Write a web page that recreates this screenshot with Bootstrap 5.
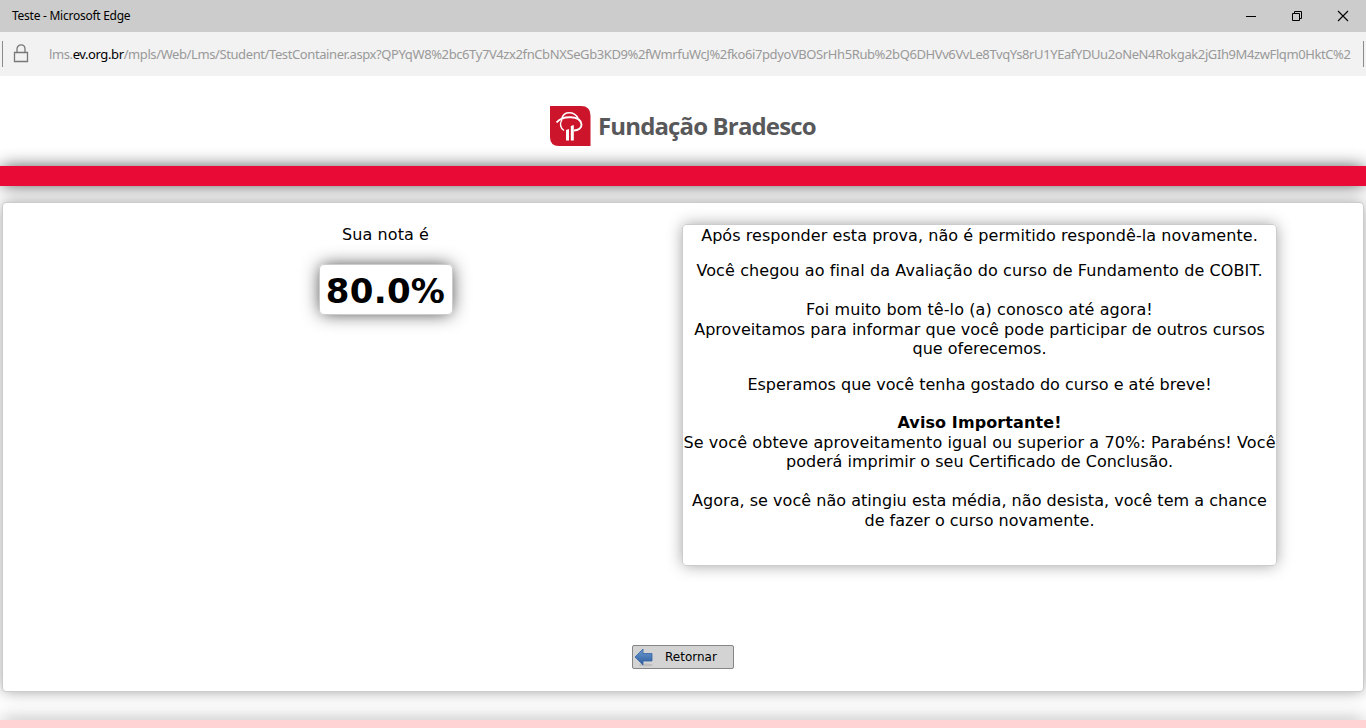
<!DOCTYPE html>
<html lang="pt-BR">
<head>
<meta charset="utf-8">
<meta name="viewport" content="width=device-width, initial-scale=1">
<title>Teste</title>
<link href="https://cdn.jsdelivr.net/npm/bootstrap@5.3.0/dist/css/bootstrap.min.css" rel="stylesheet">
<style>
body{height:728px;font-family:Verdana,"DejaVu Sans",sans-serif;color:#000;font-size:16px;line-height:19.5px}
.titlebar{height:32px;background:#ccc;font:12px/32px "Noto Sans",sans-serif;padding-left:12px}
.titlebar .caption{letter-spacing:-.26px}
.winbtns svg{width:46px;height:32px}
.address{height:44px;background:#f2f2f2;font:13px/44px "Noto Sans",sans-serif;color:#999;padding:0 2px}
.address .edge{width:1px;height:26px;background:#8b8b8b}
.lock{margin-left:9px}
.url{letter-spacing:-.4px;width:1304px;margin-left:17px}
.url b{font-weight:400;color:#000}
.brandrow{height:90px;padding:30px 0 0 549px}
.brandname{font:700 24px/39px "Open Sans",sans-serif;color:#58585b;margin-left:7px;letter-spacing:-.86px}
.redbar{height:20px;background:#e90b35}
.redbar,.score,.footbar{box-shadow:0 0 18px -2px #333}
.panel{margin:16px 2px 0;height:490px;border:1px solid #ccc;border-radius:4px;background:#fff;box-shadow:0 0 16px -1px #999;padding-top:21px}
.cols{width:1188px;margin-left:86px}
.grade{padding-top:.7px;letter-spacing:.1px}
.score{width:134px;height:51px;margin:20px auto 0;border:1px solid #ccc;border-radius:5px;font:700 34px/52px Verdana,"DejaVu Sans",sans-serif;letter-spacing:.3px}
.notice{width:595px;height:342px;border:1px solid #ccc;border-radius:4px;box-shadow:0 0 16px -1px #999;white-space:nowrap;padding-top:.7px}
.notice p{margin:0 0 16px}
.notice p.farewell{margin-bottom:19px}
.w1{letter-spacing:.03px}
.w2{letter-spacing:.06px}
.w3{letter-spacing:.1px}
.back{width:102px;height:24px;border:1px solid #858585;border-radius:2px;background:#d3d3d3;font-size:12px;line-height:22px;margin:79px auto 0 629px;padding:0 0 0 1px;color:#000}
.back span{margin-left:11px}
.footbar{height:8px;margin-top:28px;background:#ffd3d3}
</style>
</head>
<body class="overflow-hidden bg-white">
<header>
  <div class="titlebar d-flex justify-content-between">
    <span class="caption">Teste - Microsoft Edge</span>
    <div class="winbtns d-flex" aria-hidden="true">
      <svg viewBox="0 0 46 32"><path d="M18 16.500h10" stroke="#000"/></svg>
      <svg viewBox="0 0 46 32" fill="none" stroke="#000"><path d="M18.500 13.500h7v7h-7zM20.500 13v-1.500h7v7h-1.500"/></svg>
      <svg viewBox="0 0 46 32"><path d="M18 11l10 10M28 11L18 21" stroke="#000" stroke-width="1.1"/></svg>
    </div>
  </div>
  <div class="address d-flex align-items-center">
    <span class="edge"></span>
    <svg class="lock flex-shrink-0" width="20" height="22" viewBox="0 0 20 22" fill="none" stroke="#777" stroke-width="1.3"><path d="M2.500 9.500h13v9h-13zM5 9V6C5 .5 13 .5 13 6v3"/></svg>
    <span class="url text-nowrap">lms.<b>ev.org.br</b>/mpls/Web/Lms/Student/TestContainer.aspx?QPYqW8%2bc6Ty7V4zx2fnCbNXSeGb3KD9%2fWmrfuWcJ%2fko6i7pdyoVBOSrHh5Rub%2bQ6DHVv6VvLe8TvqYs8rU1YEafYDUu2oNeN4Rokgak2jGIh9M4zwFlqm0HktC%2</span>
    <span class="edge ms-auto"></span>
  </div>
</header>
<div class="brandrow d-flex align-items-start">
  <svg width="42" height="40" viewBox="0 0 42 40"><path d="M1 0h31q9.500 0 9.500 9.500V40H10Q1 40 1 31z" fill="#cc142a"/><g fill="none" stroke="#fff"><path d="M7.500 16.500C14 9 31.500 9.500 32.500 18.500c.2 3.500-3 6-7.500 6" stroke-width="1.900"/><path d="M13 12C15 5 25 5 29 12" stroke-width="1.600"/><path d="M13 13.500C10.500 18 11.500 22 15 24.500" stroke-width="1.300"/></g><path d="M17 24l3-1v11.500h-3zM21.800 20l3-1v15.500h-3z" fill="#fff"/></svg>
  <span class="brandname">Fundação Bradesco</span>
</div>
<div class="redbar"></div>
<main class="panel">
  <div class="cols d-flex text-center">
    <section class="flex-fill">
      <div class="grade">Sua nota é</div>
      <div class="score">80.0%</div>
    </section>
    <section class="notice">
      <p class="w2">Após responder esta prova, não é permitido respondê-la novamente.</p>
      <p><span class="w3">Você chegou ao final da Avaliação do curso de Fundamento de COBIT.<br><br>Foi muito bom tê-lo (a) conosco até agora!</span><br><span class="w1">Aproveitamos para informar que você pode participar de outros cursos</span><br>que oferecemos.</p>
      <p class="farewell">Esperamos que você tenha gostado do curso e até breve!</p>
      <p><b class="w3">Aviso Importante!</b><br><span class="w3">Se você obteve aproveitamento igual ou superior a 70%: Parabéns! Você</span><br>poderá imprimir o seu Certificado de Conclusão.<br><br><span class="w1">Agora, se você não atingiu esta média, não desista, você tem a chance</span><br>de fazer o curso novamente.</p>
    </section>
  </div>
  <button class="back d-flex align-items-center" type="button">
    <svg width="20" height="20" viewBox="0 0 20 20"><defs><linearGradient id="ar" x2="0" y2="1"><stop stop-color="#6b9bd0"/><stop offset="1" stop-color="#2d5b9e"/></linearGradient></defs><ellipse cx="12" cy="18" rx="7" ry="1.500" fill="#bdbdbd"/><path d="M1 10l8-8v4.500h9v7.500H9v4z" fill="url(#ar)" stroke="#3465a4" stroke-width=".8"/></svg>
    <span>Retornar</span>
  </button>
</main>
<footer class="footbar"></footer>
<script src="https://cdn.jsdelivr.net/npm/bootstrap@5.3.0/dist/js/bootstrap.bundle.min.js"></script>
</body>
</html>
